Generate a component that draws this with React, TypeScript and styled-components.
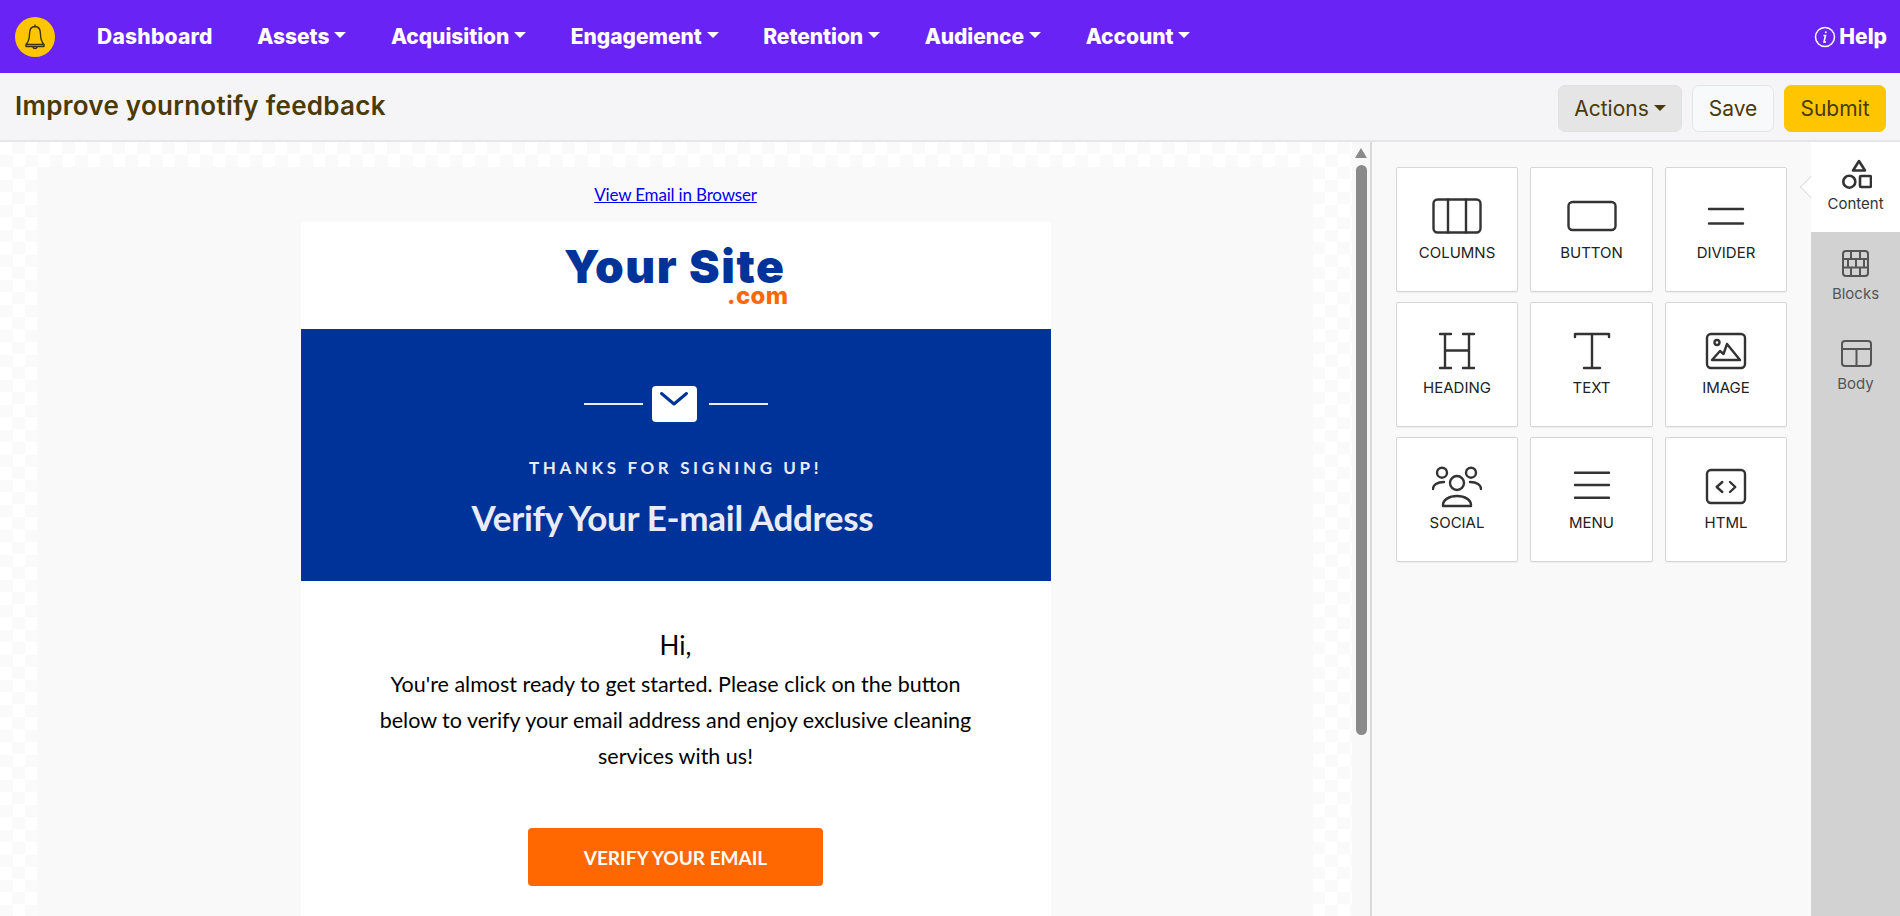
import React from "react";
import styled, { createGlobalStyle } from "styled-components";

const Global = createGlobalStyle`
  html, body { margin: 0; padding: 0; height: 100%; overflow: hidden; background: #fff; }
  * { box-sizing: border-box; }
`;
const Page = styled.div`
  display: flex; flex-direction: column; height: 916px; width: 1900px; overflow: hidden;
  font-family: Inter, "Liberation Sans", sans-serif;
`;
const Nav = styled.nav`
  flex: 0 0 73px; background: #6a23f5; display: flex; align-items: center;
  padding: 0 13px 0 15px; color: #fff;
`;
const LogoCircle = styled.div`
  width: 40px; height: 40px; border-radius: 50%; background: #ffc600;
  display: flex; align-items: center; justify-content: center; margin-right: 42px;
`;
const NavList = styled.div`display: flex; align-items: center; gap: 44.5px; flex: 1;`;
const NavItem = styled.a<{ $ls?: number }>`
  display: flex; align-items: center; gap: 5px; font-size: 21px; font-weight: 800;
  letter-spacing: ${p => p.$ls ?? -0.05}px; white-space: nowrap; color: #fff; margin-top: -1px;
`;
const Caret = styled.span<{ $c?: string }>`
  width: 0; height: 0; border-left: 6px solid transparent; border-right: 6px solid transparent;
  border-top: 6px solid ${p => p.$c || "#fff"}; margin-top: -2px;
`;
const Help = styled.a`display: flex; align-items: center; gap: 3px; font-size: 21px; font-weight: 800; color: #fff;`;
const SubBar = styled.div`
  flex: 0 0 69px; background: #f5f5f7; border-bottom: 2px solid #e6e6e8;
  display: flex; align-items: center; justify-content: space-between; padding: 4px 14px 0 15px;
`;
const Title = styled.h1`
  margin: 0 0 7px; font-size: 26px; font-weight: 600; color: #4a3a05; letter-spacing: 0.28px;
`;
const Actions = styled.div`display: flex; gap: 10px;`;
const Btn = styled.button<{ $kind: "grey" | "light" | "yellow"; $w: number }>`
  height: 47px; width: ${p => p.$w}px; border-radius: 7px; font: 400 21px Inter, sans-serif; color: #4a3a05;
  display: flex; align-items: center; justify-content: center; gap: 5px; padding: 0;
  border: 1px solid ${p => p.$kind === "light" ? "#e3e5e8" : p.$kind === "grey" ? "#e0e0e0" : "#ffc600"};
  background: ${p => p.$kind === "light" ? "#f8f9fa" : p.$kind === "grey" ? "#e5e5e5" : "#ffc600"};
`;
const Main = styled.div`flex: 1; display: flex; min-height: 0;`;
const Canvas = styled.div`
  width: 1370px; position: relative; overflow: hidden; padding: 25px 57px 0 38px;
  background-color: #fff;
  background-image: conic-gradient(#fafafa 25%, #fff 0 50%, #fafafa 0 75%, #fff 0);
  background-size: 25px 25px;
`;
const Track = styled.div`
  position: absolute; top: 0; bottom: 0; right: 0; width: 18px; background: #f8f8f8;
`;
const Arrow = styled.div`
  position: absolute; top: 6px; left: 3px; width: 0; height: 0;
  border-left: 6.5px solid transparent; border-right: 6.5px solid transparent; border-bottom: 10px solid #8a8a8a;
`;
const Thumb = styled.div`
  position: absolute; top: 23px; left: 4px; width: 11px; height: 570px; border-radius: 6px; background: #8a8a8a;
`;
const EmailBg = styled.div`background: #f9f9f9; height: 900px;`;
const LinkRow = styled.div`height: 55px; display: flex; justify-content: center; align-items: flex-start; padding-top: 18px;`;
const BrowserLink = styled.a`
  font: 400 17px/20px Lato, sans-serif; color: #0000ee; text-decoration: underline; letter-spacing: -0.17px;
`;
const EmailBody = styled.div`width: 750px; margin: 0 auto; background: #fff; height: 700px;`;
const LogoBlock = styled.div`height: 107px; display: flex; flex-direction: column; align-items: flex-end; padding: 22px 262px 0 0;`;
const LogoMain = styled.div`
  font: 900 46px/44px Inter, sans-serif; color: #00339a; letter-spacing: 1.6px; margin-right: 3px; white-space: nowrap;
`;
const LogoCom = styled.div`font: 800 24px/16px Inter, sans-serif; color: #ff6700; letter-spacing: 0.4px;`;
const Hero = styled.div`
  height: 252px; background: #00339a; display: flex; flex-direction: column; align-items: center; padding-top: 57px;
`;
const MailRow = styled.div`display: flex; align-items: center; gap: 9px; height: 36px;`;
const MailLine = styled.div`width: 59px; height: 2px; background: #e9ecf8;`;
const MailBox = styled.div`
  width: 45px; height: 36px; background: #fff; border-radius: 4px; display: flex; justify-content: center; margin-right: 3px;
`;
const Thanks = styled.div`
  margin-top: 34px; font: 700 17px/24px Lato, sans-serif; letter-spacing: 3.6px; color: #e9ecf8; white-space: nowrap;
`;
const Verify = styled.h2`
  margin: 15px 0 0; padding-right: 6px; font: 700 35px/44px Lato, sans-serif; color: #e9ecf8; white-space: nowrap; letter-spacing: -0.3px;
`;
const Copy = styled.div`
  padding-top: 44px; text-align: center; color: #000; font-family: Lato, sans-serif;
`;
const Hi = styled.div`font-size: 26px; line-height: 40px; margin-bottom: 1px;`;
const Para = styled.div`font-size: 21.5px; line-height: 36px; white-space: nowrap;`;
const Cta = styled.a`
  display: flex; align-items: center; justify-content: center; width: 295px; height: 58px; margin: 54px auto 0;
  border-radius: 4px; background: #ff6700; color: #fff; font: 700 19px Lato, sans-serif;
`;
const Panel = styled.div`
  width: 441px; background: #f9f9f9; border-left: 2px solid #d9d9d9; padding: 25px 0 0 24px;
`;
const Grid = styled.div`
  display: grid; grid-template-columns: 122px 122.5px 122px; grid-auto-rows: 125px; column-gap: 12.25px; row-gap: 10px;
`;
const Card = styled.div`
  background: #fff; border: 1px solid #d6d6d6; border-radius: 2px; box-shadow: 0 1px 1px rgba(0,0,0,.05);
  display: flex; flex-direction: column; align-items: center; padding-top: 23px;
`;
const CardLabel = styled.div`font-size: 15px; line-height: 20px; color: #222; margin-top: 2px;`;
const Tabs = styled.div`flex: 1; background: #d2d2d2; position: relative;`;
const Tab = styled.div<{ $active?: boolean }>`
  height: 90px; position: relative; display: flex; flex-direction: column; align-items: center;
  padding-top: 16px;
  background: ${p => p.$active ? "#fff" : "transparent"};
  color: ${p => p.$active ? "#333" : "#555"};
  font-size: 15px; line-height: 20px;
`;
const Notch = styled.span`
  position: absolute; left: -8px; top: 37px; width: 16px; height: 16px; background: #fff; transform: rotate(45deg);
  border-left: 1px solid #ddd; border-bottom: 1px solid #ddd;
`;
const TabLabel = styled.div`margin-top: 4px;`;

const S = (p: { size?: number; children: React.ReactNode; sw?: number; c?: string }) => (
  <svg width={p.size ?? 50} height={p.size ?? 50} viewBox={`0 0 ${p.size ?? 50} ${p.size ?? 50}`} fill="none"
    stroke={p.c ?? "#333"} strokeWidth={p.sw ?? 2.4} strokeLinecap="round" strokeLinejoin="round">{p.children}</svg>
);
const items: [string, React.ReactNode][] = [
  ["COLUMNS", <S><rect x="1.500" y="8.500" width="47" height="33" rx="4"/><path d="M16 8.500v33M34 8.500v33"/></S>],
  ["BUTTON", <S><rect x="1.500" y="11" width="47" height="28" rx="4"/></S>],
  ["DIVIDER", <S><path d="M8 18h34M8 32.500h34"/></S>],
  ["HEADING", <S><path d="M8 8h11M13 8v34M8 42h11M31 8h11M37 8v34M31 42h11M13 24.500h24"/></S>],
  ["TEXT", <S><path d="M8 11V8h34v3M25 8v34M17 42h16"/></S>],
  ["IMAGE", <S><rect x="6" y="8" width="38" height="34" rx="4"/><circle cx="16" cy="16.500" r="2.500"/><path d="M11 34l8-9 3.500 3 3.500-10 13 16z"/></S>],
  ["SOCIAL", <S><circle cx="25" cy="22" r="7"/><circle cx="10" cy="11.700" r="5"/><circle cx="39" cy="11.700" r="5"/><path d="M11 45v-1c0-5 6-9 14-9s14 4 14 9v1zM1 28c0-4 4-7 11-7M49 28c0-4-4-7-11-7"/></S>],
  ["MENU", <S><path d="M8 11.700h34M8 24h34M8 36.700h34"/></S>],
  ["HTML", <S><rect x="6" y="9" width="38" height="33" rx="4"/><path d="M21.300 21l-5.600 5 5.600 5M29 21l5.300 5-5.300 5"/></S>],
];
const navs = ["Assets", "Acquisition", "Engagement", "Retention", "Audience", "Account"];

export default function App() {
  return (
    <Page>
      <Global />
      <Nav>
        <LogoCircle>
          <svg width="24" height="28" viewBox="0 0 24 28" fill="none" stroke="#3f3200" strokeWidth="1.400" strokeLinejoin="round">
            <path d="M12 3.500c-3.800 0-5.500 3.500-5.500 7.500 0 5-1 8-3.500 10.500h18C18.500 19 17.500 16 17.500 11c0-4-1.700-7.500-5.500-7.500z"/>
            <path d="M12 3.500V1.500M3 21.500v2h18v-2"/>
            <path d="M10 23.500a2 2 0 0 0 4 0" />
          </svg>
        </LogoCircle>
        <NavList>
          <NavItem $ls={0.25}>Dashboard</NavItem>
          {navs.map(n => <NavItem key={n}>{n}<Caret /></NavItem>)}
        </NavList>
        <Help>
          <svg width="22" height="22" viewBox="0 0 22 22" fill="none" stroke="#fff" strokeWidth="1.500">
            <circle cx="11" cy="11" r="9.500"/>
            <path d="M9.500 9.500h2L10 16h2" strokeWidth="1.600"/>
            <circle cx="11.800" cy="6.300" r="1" fill="#fff" stroke="none"/>
          </svg>
          Help
        </Help>
      </Nav>
      <SubBar>
        <Title>Improve yournotify feedback</Title>
        <Actions>
          <Btn $kind="grey" $w={124}>Actions<Caret $c="#4a3a05" /></Btn>
          <Btn $kind="light" $w={82}>Save</Btn>
          <Btn $kind="yellow" $w={102}>Submit</Btn>
        </Actions>
      </SubBar>
      <Main>
        <Canvas>
          <EmailBg>
            <LinkRow><BrowserLink>View Email in Browser</BrowserLink></LinkRow>
            <EmailBody>
              <LogoBlock>
                <LogoMain>Your Site</LogoMain>
                <LogoCom>.com</LogoCom>
              </LogoBlock>
              <Hero>
                <MailRow>
                  <MailLine />
                  <MailBox>
                    <svg width="30" height="22" viewBox="0 0 30 22" fill="none" stroke="#00339a" strokeWidth="3" strokeLinecap="round" strokeLinejoin="round">
                      <path d="M2.500 7.500L15 18l12.500-10.500"/>
                    </svg>
                  </MailBox>
                  <MailLine />
                </MailRow>
                <Thanks>THANKS FOR SIGNING UP!</Thanks>
                <Verify>Verify Your E-mail Address</Verify>
              </Hero>
              <Copy>
                <Hi>Hi,</Hi>
                <Para>You're almost ready to get started. Please click on the button</Para>
                <Para>below to verify your email address and enjoy exclusive cleaning</Para>
                <Para>services with us!</Para>
                <Cta>VERIFY YOUR EMAIL</Cta>
              </Copy>
            </EmailBody>
          </EmailBg>
          <Track><Arrow /><Thumb /></Track>
        </Canvas>
        <Panel>
          <Grid>
            {items.map(([l, i]) => <Card key={l}>{i}<CardLabel>{l}</CardLabel></Card>)}
          </Grid>
        </Panel>
        <Tabs>
          <Tab $active>
            <Notch />
            <S size={32} c="#333" sw={2.6}><path d="M19 3l6 9.500H13z"/><circle cx="9.300" cy="23.700" r="6"/><rect x="20" y="18" width="11" height="11" rx="1"/></S>
            <TabLabel>Content</TabLabel>
          </Tab>
          <Tab>
            <S size={32} c="#555" sw={2}><rect x="3" y="3" width="25" height="25" rx="3"/><path d="M3 11h25M3 19.500h25M11 3v8M20 3v8M8 11v8.500M16 11v8.500M24 11v8.500M11 19.500V28M20 19.500V28"/></S>
            <TabLabel>Blocks</TabLabel>
          </Tab>
          <Tab>
            <S size={32} c="#555" sw={2}><rect x="2" y="3" width="29" height="25" rx="3"/><path d="M2 11h29M16.500 11v17"/></S>
            <TabLabel>Body</TabLabel>
          </Tab>
        </Tabs>
      </Main>
    </Page>
  );
}
